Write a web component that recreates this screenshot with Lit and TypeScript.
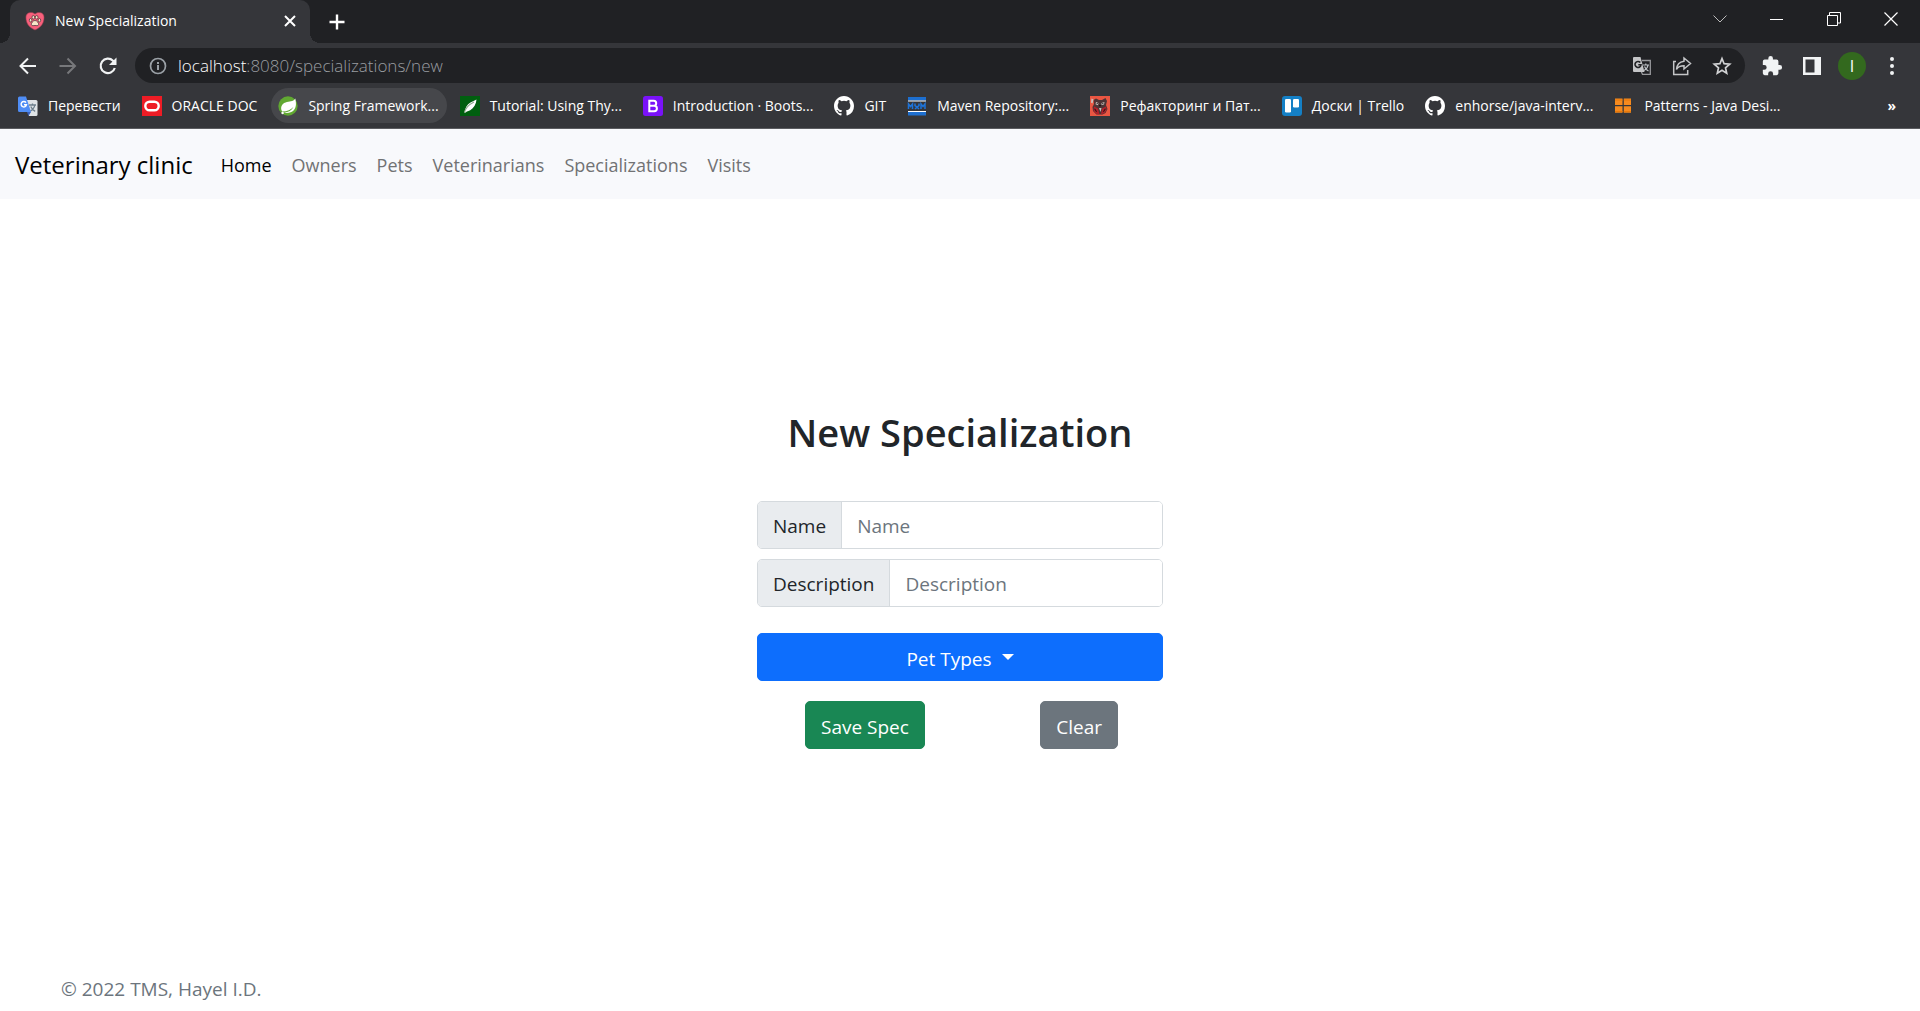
import { LitElement, html, css, svg, TemplateResult } from "lit";
import { customElement, state } from "lit/decorators.js";

const github = html`<svg viewBox="0 0 16 16" width="20" height="20" aria-hidden="true"><path fill="#fff" d="M8 0C3.58 0 0 3.58 0 8c0 3.54 2.29 6.53 5.47 7.59.4.07.55-.17.55-.38 0-.19-.01-.82-.01-1.49-2.01.37-2.53-.49-2.69-.94-.09-.23-.48-.94-.82-1.13-.28-.15-.68-.52-.01-.53.63-.01 1.08.58 1.23.82.72 1.21 1.87.87 2.33.66.07-.52.28-.87.51-1.07-1.78-.2-3.64-.89-3.64-3.95 0-.87.31-1.59.82-2.15-.08-.2-.36-1.02.08-2.12 0 0 .67-.21 2.2.82a7.6 7.6 0 0 1 4 0c1.53-1.04 2.2-.82 2.2-.82.44 1.1.16 1.92.08 2.12.51.56.82 1.27.82 2.15 0 3.07-1.87 3.75-3.65 3.95.29.25.54.73.54 1.48 0 1.07-.01 1.93-.01 2.2 0 .21.15.46.55.38A8.01 8.01 0 0 0 16 8c0-4.42-3.58-8-8-8z"/></svg>`;

const icon = (body: TemplateResult, size = 20) =>
  html`<svg viewBox="0 0 20 20" width=${size} height=${size} aria-hidden="true">${body}</svg>`;

const googleTranslate = icon(svg`
  <path fill="#dfe3e6" d="M8 4h10a1.5 1.5 0 0 1 1.5 1.5v13A1.5 1.5 0 0 1 18 20H11z"/>
  <path fill="none" stroke="#6d7f8c" stroke-width="1.3" d="M11 9h7M14.5 7.5V9M16.8 9c-.4 2.6-2.4 5-4.6 6.2M12.8 10.5c.8 2 2.4 3.8 4.4 4.8"/>
  <path fill="#3a5fb8" d="M9 16h4l-2.5 4z"/>
  <path fill="#4f8df5" d="M1.5.5H8L13 16H1.5A1.5 1.5 0 0 1 0 14.5V2A1.5 1.5 0 0 1 1.5.5z"/>
  <path fill="none" stroke="#fff" stroke-width="1.4" d="M8 6.6A2.7 2.7 0 1 0 8.5 8.7H6"/>`);

const oracle = icon(svg`<path fill="#ee1c25" d="M0 0h20v20H0z"/><rect x="3.3" y="5.7" width="13.4" height="8.6" rx="4.3" fill="none" stroke="#fff" stroke-width="2.4"/>`);

const spring = icon(svg`
  <circle cx="10" cy="10" r="9.7" fill="#61a832"/>
  <path fill="#fff" d="M17.3 2.6c.9 4.4 1.3 8.7-1.5 11.7-2.4 2.6-6.5 3-10 2.3 4.8-.4 8-2.3 9.6-5.6-2.5 2.8-5.8 4.3-11.200 4.600C2 12 3.400 7.600 7.600 6.400c3.800-1 7.300-.3 9.700-3.800z"/>
  <circle cx="4.6" cy="17" r="1.2" fill="#fff"/>`);

const thymeleaf = icon(svg`
  <path fill="#005f0f" d="M0 0h20v20H0z"/>
  <path fill="#fff" d="M16.5 3.5c-.3 4.5-2.600 8.500-6.300 10.700-1.600.9-3.200.8-4.200 2L4.500 17c.3-5 2.500-8.500 6-10.600 2-1.200 4-1.500 6-2.900z"/>
  <path fill="none" stroke="#8fa98f" stroke-width="1.2" d="M4.500 16.500c1-5 4.500-8 9.500-10.500"/>`);

const bootstrap = icon(svg`
  <rect width="20" height="20" rx="2.5" fill="#7a12f8"/>
  <path fill="none" stroke="#fff" stroke-width="2" d="M6.300 4.800h4.400a2.500 2.500 0 0 1 0 5H6.300h4.900a2.700 2.700 0 0 1 0 5.400H6.300z"/>`);

const maven = icon(svg`
  <path fill="#1d6fd0" d="M1 1h18v3.500H1zM1 16h18v3.500H1z"/>
  <path fill="#fff" d="M1 4.500h18v1H1zM1 15h18v1H1z"/>
  <path fill="none" stroke="#1d74da" stroke-width="1.5" d="M1.500 13V8l2 2.500 2-2.500v5M8 7.500v2l2 1.500 2-1.500v-2M8 13l2-2 2 2M14 13V8l2 2.500L18 8v5"/>`);

const guru = icon(svg`
  <path fill="#ea5642" d="M0 0h20v20H0z"/>
  <path fill="#4d3436" d="M3.500 4l2.500-1.500 3 1.500h3l3.500-2 1.500 3-1 4 1.500 4-2 4-3 1.500h-6L3 15l-.5-4 1.500-3z"/>
  <path fill="#b3202a" d="M4 10.500l4 2 1.500 6-3-.5-3-3zM16 10.500l-4 2-1 6 3.500-1.500 2-3z"/>
  <path fill="#c9c2bd" d="M6 6l2.500 1L8 9.200 5.500 8.200zM11.500 7l3-1-.5 2.500-2.500.5zM1.500 2.500l2 1-1 4-1.500-1zM9 12h2.500l-1 4z"/>
  <path fill="#1d1617" d="M6.700 7h1v1h-1zM12.300 7h1v1h-1zM9 9h2v1.300H9zM5 12.500l2 3-.8.500-2-3zM15 12.500l-2 3 .8.500 2-3z"/>`);

const trello = icon(svg`
  <rect width="20" height="20" rx="3" fill="#1480c6"/>
  <rect x="3" y="3" width="6" height="13.500" rx="1.300" fill="#fff"/>
  <rect x="11" y="3" width="6" height="8.500" rx="1.300" fill="#fff"/>`);

const patterns = icon(svg`<path fill="#f68a1e" d="M1 2.500h7.500v6.500H1zM9.800 2.500h7.200v6.500h-7.200zM1 10.300h7.500v6.500H1zM9.800 10.300h7.200v6.500h-7.200z"/>
  <path fill="#e97808" d="M1 3.500h7.500v1H1zM9.800 3.500h7.200v1h-7.200zM1 15h7.500v1H1zM9.800 15h7.200v1h-7.200z"/>`);

const bookmarks = [
  { icon: googleTranslate, label: "Перевести" },
  { icon: oracle, label: "ORACLE DOC" },
  { icon: spring, label: "Spring Framework...", active: true },
  { icon: thymeleaf, label: "Tutorial: Using Thy..." },
  { icon: bootstrap, label: "Introduction · Boots..." },
  { icon: github, label: "GIT" },
  { icon: maven, label: "Maven Repository:..." },
  { icon: guru, label: "Рефакторинг и Пат..." },
  { icon: trello, label: "Доски | Trello" },
  { icon: github, label: "enhorse/java-interv..." },
  { icon: patterns, label: "Patterns - Java Desi..." },
];

@customElement("browser-chrome")
export class BrowserChrome extends LitElement {
  static styles = css`
    :host { display: block; background: #35363a; color: #fff; font: 14px/20px "Open Sans", "Noto Sans", sans-serif; }
    button { display: inline-flex; align-items: center; justify-content: center; padding: 0; border: 0; background: none; color: inherit; font: inherit; }
    svg { display: block; flex: none; }
    .strip { display: flex; height: 43px; background: #202124; padding: 0 1px 0 10px; }
    .tab { position: relative; display: flex; align-items: center; width: 300px; box-sizing: border-box; padding: 0 13px 2px 15px; gap: 10px; background: #35363a; border-radius: 10px 10px 0 0; }
    .tab::before, .tab::after { content: ""; position: absolute; bottom: 0; width: 10px; height: 10px; }
    .tab::before { left: -10px; background: radial-gradient(circle at 0 0, transparent 10px, #35363a 10px); }
    .tab::after { right: -10px; background: radial-gradient(circle at 100% 0, transparent 10px, #35363a 10px); }
    .title { flex: 1; }
    .plus { margin-left: 17px; }
    .window { display: flex; align-items: center; margin-left: auto; height: 37px; }
    .window button { width: 57px; height: 37px; }
    .toolbar { display: flex; align-items: center; height: 45px; padding: 0 8px; }
    .nav button { width: 40px; height: 40px; }
    .nav { display: flex; }
    .address { flex: 1; display: flex; align-items: center; height: 35px; margin: 0 7px; padding: 0 13px 0 14px; gap: 11px; border-radius: 18px; background: #202124; }
    .url { flex: 1; font-size: 17px; font-weight: 300; color: #9a9da1; }
    .host { color: #fff; }
    .actions { display: flex; gap: 20px; }
    .tools { display: flex; align-items: center; }
    .tools button { width: 40px; height: 40px; }
    .avatar { display: flex; align-items: center; justify-content: center; width: 28px; height: 28px; border-radius: 50%; background: #33691e; font-size: 16px; }
    .marks { display: flex; align-items: center; height: 40px; box-sizing: border-box; padding: 0 24px 5px 11px; gap: 6px; }
    .mark { display: flex; align-items: center; gap: 10px; height: 35px; padding: 0 8px 0 7px; border-radius: 18px; color: inherit; text-decoration: none; white-space: nowrap; }
    .active { background: #46474b; }
    .more { margin-left: auto; font-weight: 700; }
    .edge { height: 1px; background: #5b5c60; }
  `;

  render() {
    return html`
      <div class="strip">
        <div class="tab">
          <svg viewBox="0 0 20 20" width="20" height="20" aria-hidden="true">
            <path fill="#f8607c" stroke="#8f3a4b" stroke-width=".6" d="M10 3C8 .6 1 .6.9 6.2.8 12 4 16.500 10 19c6-2.500 9.200-7 9.100-12.800C19 .6 12 .6 10 3z"/>
            <path fill="#f7e6c8" stroke="#3e2930" stroke-width=".7" d="M10 9.500c2 0 4 2.600 3.600 4.200-.4 1.500-2.200.8-3.600.8s-3.200.7-3.600-.8C6 12.100 8 9.500 10 9.500z"/>
            <g fill="#f7e6c8" stroke="#3e2930" stroke-width=".7"><ellipse cx="5.600" cy="9.200" rx="1.300" ry="1.700"/><ellipse cx="8.300" cy="6.300" rx="1.300" ry="1.800"/><ellipse cx="11.700" cy="6.300" rx="1.300" ry="1.800"/><ellipse cx="14.400" cy="9.200" rx="1.300" ry="1.700"/></g>
          </svg>
          <span class="title">New Specialization</span>
          <button aria-label="Close tab"><svg viewBox="0 0 14 14" width="14" height="14"><path stroke="#fff" stroke-width="2" d="M2 2l10 10M12 2L2 12"/></svg></button>
        </div>
        <button class="plus" aria-label="New tab"><svg viewBox="0 0 20 20" width="20" height="20"><path stroke="#fff" stroke-width="2.400" d="M10 2.500v15M2.500 10h15"/></svg></button>
        <div class="window">
          <button aria-label="Search tabs"><svg viewBox="0 0 14 14" width="14" height="14"><path fill="none" stroke="#bbb" d="M.5 3.500L7 10l6.500-6.500"/></svg></button>
          <button aria-label="Minimize"><svg viewBox="0 0 14 14" width="14" height="14"><path fill="#fff" d="M0 7h13v1H0z"/></svg></button>
          <button aria-label="Restore"><svg viewBox="0 0 14 14" width="14" height="14"><path fill="none" stroke="#fff" d="M.5 3.500h10v10H.5zM2.500 3V.5h11v10.500H11"/></svg></button>
          <button aria-label="Close"><svg viewBox="0 0 14 14" width="14" height="14"><path stroke="#fff" stroke-width="1.200" d="M.5.5l13 13M13.500.5L.5 13.500"/></svg></button>
        </div>
      </div>
      <div class="toolbar">
        <div class="nav">
          <button aria-label="Back"><svg viewBox="0 0 20 20" width="20" height="20"><path fill="none" stroke="#f1f3f4" stroke-width="2" d="M18 10H3M10 2.500L2.500 10l7.500 7.500"/></svg></button>
          <button aria-label="Forward"><svg viewBox="0 0 20 20" width="20" height="20"><path fill="none" stroke="#77787b" stroke-width="2" d="M1.500 10h15M9.500 2.500L17 10l-7.500 7.500"/></svg></button>
          <button aria-label="Reload"><svg viewBox="0 0 20 20" width="20" height="20"><path fill="none" stroke="#f1f3f4" stroke-width="2.200" d="M16.800 12A7.200 7.200 0 1 1 15 4.800L17 7"/><path fill="#f1f3f4" d="M18.500 1.500V9H11z"/></svg></button>
        </div>
        <div class="address">
          <svg viewBox="0 0 18 18" width="18" height="18" aria-hidden="true"><circle cx="9" cy="9" r="7.500" fill="none" stroke="#9aa0a6" stroke-width="1.700"/><path fill="#9aa0a6" d="M8 8h2v5H8zM8 5h2v2H8z"/></svg>
          <span class="url"><span class="host">localhost</span>:8080/specializations/new</span>
          <div class="actions">
            <button aria-label="Translate this page"><svg viewBox="0 0 20 20" width="20" height="20"><path fill="none" stroke="#98999c" stroke-width="1.300" d="M10 4.500h8.300v13.800h-7.800L9 15"/><path fill="none" stroke="#bdc1c6" stroke-width="1.200" d="M11 9h6M13.800 7.500V9M16 9c-.3 2.500-2 4.500-4 5.500M12.500 10.500c.8 2 2.200 3.500 4 4.500"/><path fill="#c4c5c7" d="M2 1h6.500l4 15H2a1 1 0 0 1-1-1V2a1 1 0 0 1 1-1z"/><path fill="none" stroke="#202124" stroke-width="1.600" d="M8.300 6.500a3 3 0 1 0 .7 2.200H6.300"/></svg></button>
            <button aria-label="Share"><svg viewBox="0 0 20 20" width="20" height="20"><path fill="none" stroke="#c4c5c7" stroke-width="1.500" d="M4 5.500H1.700v13h14V14M12 2l6.500 5.500L12 13v-3.200c-3.500 0-6 1-7.500 3.700.3-4.500 3-7.700 7.500-8.300z"/></svg></button>
            <button aria-label="Bookmark this tab"><svg viewBox="0 0 20 20" width="20" height="20"><path fill="none" stroke="#d0d1d3" stroke-width="1.700" d="M10 2.600l2.100 5.100 5.600.5-4.200 3.600 1.200 5.400L10 14.300l-4.700 2.900 1.200-5.400L2.300 8.200l5.600-.5z"/></svg></button>
          </div>
        </div>
        <div class="tools">
          <button aria-label="Extensions"><svg viewBox="0 0 24 24" width="22" height="22"><path fill="#f1f3f4" d="M20.500 11H19V7a2 2 0 0 0-2-2h-4V3.500a2.500 2.500 0 0 0-5 0V5H4a2 2 0 0 0-2 2v3.800h1.500a2.700 2.700 0 0 1 0 5.400H2V20a2 2 0 0 0 2 2h3.800v-1.500a2.700 2.700 0 0 1 5.400 0V22H17a2 2 0 0 0 2-2v-4h1.500a2.500 2.500 0 0 0 0-5z"/></svg></button>
          <button aria-label="Side panel"><svg viewBox="0 0 18 18" width="18" height="18"><path fill="#f1f3f4" fill-rule="evenodd" d="M0 0h18v18H0zM2.500 2.500v13h9v-13z"/></svg></button>
          <button aria-label="Profile"><span class="avatar">I</span></button>
          <button aria-label="Menu"><svg viewBox="0 0 4 18" width="4" height="18"><path fill="#f1f3f4" d="M0 2a2 2 0 1 1 4 0 2 2 0 0 1-4 0M0 9a2 2 0 1 1 4 0 2 2 0 0 1-4 0M0 16a2 2 0 1 1 4 0 2 2 0 0 1-4 0"/></svg></button>
        </div>
      </div>
      <div class="marks">
        ${bookmarks.map((b) => html`<a href="#" class=${b.active ? "mark active" : "mark"}>${b.icon}<span>${b.label}</span></a>`)}
        <button class="more" aria-label="More bookmarks">»</button>
      </div>
      <div class="edge"></div>
    `;
  }
}

@customElement("app-root")
export class AppRoot extends LitElement {
  @state() private links = ["Home", "Owners", "Pets", "Veterinarians", "Specializations", "Visits"];

  static styles = css`
    :host { display: flex; flex-direction: column; min-height: 100vh; background: #fff; color: #212529; font: 19px/30px "Open Sans", "Noto Sans", sans-serif; }
    .navbar { display: flex; align-items: center; gap: 20px; height: 70px; box-sizing: border-box; padding: 2px 15px 0; background: #f8f9fc; }
    .brand { padding-right: 8px; font-size: 24px; color: #000; text-decoration: none; }
    .links { display: flex; gap: 20px; margin: 0; padding: 0; list-style: none; font-size: 18px; }
    .link { color: #717274; text-decoration: none; }
    .current { color: #000; }
    main { flex: 1; display: flex; flex-direction: column; align-items: center; justify-content: center; padding-bottom: 16px; }
    h1 { margin: 0 0 45px; font-size: 38px; line-height: 48px; font-weight: 600; }
    form { display: flex; flex-direction: column; width: 406px; }
    .group { display: flex; height: 48px; box-sizing: border-box; margin-bottom: 10px; border: 1px solid #d5dade; border-radius: 5px; overflow: hidden; }
    label { display: flex; align-items: center; padding: 2px 15px 0; background: #e9ecef; border-right: 1px solid #d5dade; }
    input { flex: 1; min-width: 0; padding: 2px 15px 0; border: 0; outline: 0; background: #fff; color: #212529; font: inherit; }
    input::placeholder { color: #6c757d; opacity: 1; }
    .btn { display: flex; align-items: center; justify-content: center; height: 48px; padding: 4px 15px 0; border: 1px solid; border-radius: 5px; color: #fff; font: inherit; }
    .types { gap: 10px; margin: 16px 0 20px; background: #0d6efd; border-color: #0d6efd; }
    .caret { margin-bottom: 4px; border: 6px solid transparent; border-top-color: #fff; border-bottom: 0; }
    .row { display: flex; justify-content: space-between; padding: 0 45px 0 48px; }
    .save { background: #198754; border-color: #198754; }
    .clear { background: #6c757d; border-color: #6c757d; }
    footer { padding: 0 61px 7px; color: #6c757d; }
  `;

  render() {
    return html`
      <browser-chrome></browser-chrome>
      <nav class="navbar">
        <a class="brand" href="#">Veterinary clinic</a>
        <ul class="links">
          ${this.links.map((l, i) => html`<li><a href="#" class=${i === 0 ? "link current" : "link"}>${l}</a></li>`)}
        </ul>
      </nav>
      <main>
        <h1>New Specialization</h1>
        <form @submit=${(e: Event) => e.preventDefault()}>
          <div class="group"><label for="name">Name</label><input id="name" placeholder="Name" /></div>
          <div class="group"><label for="description">Description</label><input id="description" placeholder="Description" /></div>
          <button type="button" class="btn types">Pet Types<span class="caret"></span></button>
          <div class="row">
            <button type="submit" class="btn save">Save Spec</button>
            <button type="reset" class="btn clear">Clear</button>
          </div>
        </form>
      </main>
      <footer>© 2022 TMS, Hayel I.D.</footer>
    `;
  }
}
